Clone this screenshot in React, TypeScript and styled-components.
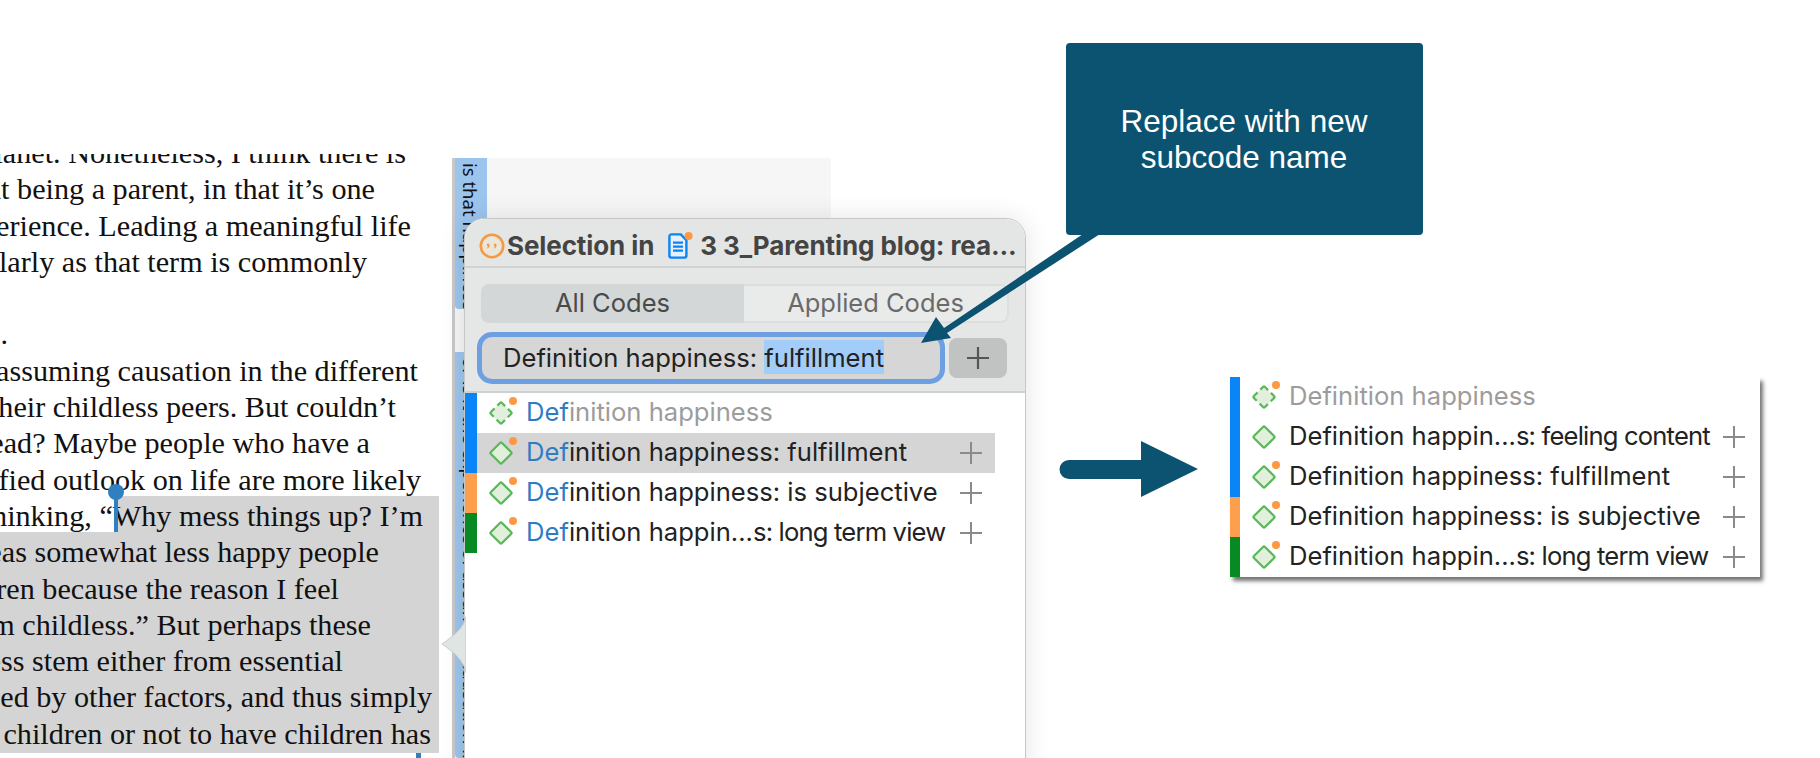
import React from 'react';
import styled, { createGlobalStyle } from 'styled-components';

const GlobalStyle = createGlobalStyle`
  html, body {
    margin: 0;
    padding: 0;
    background: #fff;
  }
`;

const NAVY = '#0b5370';
const UI_FONT = `Inter, 'Noto Sans', sans-serif`;

const Page = styled.div`
  position: relative;
  display: flex;
  width: 1820px;
  height: 758px;
  overflow: hidden;
  background: #fff;
`;

/* document text on the left, cut off by the window edge */
const DocColumn = styled.div`
  width: 452px;
  height: 604px;
  margin-top: 154px;
  flex-shrink: 0;
  overflow: hidden;
`;

const DocLines = styled.div`
  margin-top: -21px;
`;

const Line = styled.div<{ $end: number; $selected?: boolean; $from?: number }>`
  position: relative;
  box-sizing: border-box;
  display: flex;
  justify-content: flex-end;
  width: 439px;
  height: 36.3px;
  padding-right: ${(p) => 439 - p.$end}px;
  font-family: 'Liberation Serif', serif;
  font-size: 30.2px;
  line-height: 40.3px;
  white-space: nowrap;
  color: #111;
  background: ${(p) =>
    p.$from
      ? `linear-gradient(to right, transparent ${p.$from}px, #d4d4d4 ${p.$from}px)`
      : p.$selected
        ? '#d4d4d4'
        : 'transparent'};
  &:last-child {
    height: 39.3px;
  }
`;

const StartCaret = styled.div`
  position: absolute;
  left: 114px;
  top: -2px;
  width: 4px;
  height: 40px;
  background: #2f7fc1;
  &::before {
    content: '';
    position: absolute;
    left: -6px;
    top: -10px;
    width: 16px;
    height: 16px;
    border-radius: 50%;
    background: #2f7fc1;
  }
`;

const EndCaret = styled.div`
  position: absolute;
  left: 416px;
  top: 100%;
  width: 5px;
  height: 8px;
  background: #2f7fc1;
`;

/* margin with the coded segment stripes */
const MarginColumn = styled.div`
  display: flex;
  flex-direction: column;
  gap: 43px;
  width: 379px;
  margin-top: 158px;
  flex-shrink: 0;
  box-sizing: border-box;
  border-left: 3px solid #c8c8c8;
  background: #f6f6f6;
`;

const Stripe = styled.div<{ $height: number }>`
  box-sizing: border-box;
  width: 32px;
  height: ${(p) => p.$height}px;
  padding: 5px 3px 0 0;
  overflow: hidden;
  border-radius: 0 0 4px 4px;
  background: #9cc5ee;
  font-family: 'Noto Sans', sans-serif;
  font-size: 18.5px;
  line-height: 28px;
  color: #111;
  writing-mode: vertical-rl;
  white-space: nowrap;
`;

/* the coding popover */
const Popover = styled.div`
  position: absolute;
  left: 464px;
  top: 218px;
  width: 562px;
  height: 560px;
  box-sizing: border-box;
  border: 1px solid #c6c8c7;
  border-radius: 20px 20px 0 0;
  background: #fff;
  box-shadow: 0 0 26px rgba(0, 0, 0, 0.11);
  font-family: ${UI_FONT};
`;

const PopoverTip = styled.svg`
  position: absolute;
  left: -24px;
  top: 398px;
  width: 25px;
  height: 56px;
`;

const PopHeader = styled.div`
  display: flex;
  align-items: center;
  box-sizing: border-box;
  height: 49px;
  padding: 6px 0 0 14px;
  border-radius: 20px 20px 0 0;
  border-bottom: 2px solid #d1d3d2;
  background: #e3e6e5;
  font-size: 26px;
  font-weight: 700;
  letter-spacing: -0.1px;
  color: #444;
  white-space: nowrap;
`;

const HeaderText = styled.span<{ $gap: number }>`
  margin-left: ${(p) => p.$gap}px;
`;

const IconBox = styled.svg<{ $gap?: number; $pull?: number }>`
  flex-shrink: 0;
  margin-left: ${(p) => p.$gap ?? 0}px;
  margin-right: ${(p) => p.$pull ?? 0}px;
`;

const Controls = styled.div`
  display: flex;
  flex-direction: column;
  gap: 9px;
  padding: 16px 16px 7px 12px;
  border-bottom: 2px solid #cfd1d0;
  background: #e4e7e6;
`;

const Tabs = styled.div`
  display: flex;
  height: 39px;
  margin-left: 4px;
  overflow: hidden;
  border-radius: 8px;
`;

const Tab = styled.div<{ $active?: boolean }>`
  display: flex;
  align-items: center;
  justify-content: center;
  box-sizing: border-box;
  width: ${(p) => (p.$active ? '263px' : '265px')};
  padding-bottom: 2px;
  border: ${(p) => (p.$active ? 'none' : '2px solid #dcdfde')};
  border-left: none;
  border-radius: ${(p) => (p.$active ? '0' : '0 8px 8px 0')};
  background: ${(p) => (p.$active ? '#d3d7d7' : '#e9ebea')};
  font-size: 25.5px;
  color: ${(p) => (p.$active ? '#4a4a4a' : '#6a6a6a')};
`;

const SearchRow = styled.div`
  display: flex;
  align-items: center;
  gap: 4px;
`;

const SearchField = styled.div`
  display: flex;
  align-items: center;
  box-sizing: border-box;
  width: 468px;
  height: 52px;
  padding: 0 0 2px 21px;
  border: 5px solid #6e9fe3;
  border-radius: 15px;
  background: #d6d6d6;
  font-size: 25.6px;
  color: #222;
  white-space: pre;
`;

const SelectedText = styled.span`
  display: inline-flex;
  align-items: center;
  height: 34px;
  background: #a2cdf8;
`;

const AddButton = styled.div`
  display: flex;
  align-items: center;
  justify-content: center;
  width: 58px;
  height: 40px;
  border-radius: 8px;
  background: #c0c3c2;
`;

const RowList = styled.div`
  display: flex;
  flex-direction: column;
`;

const Row = styled.div`
  display: flex;
  height: 40px;
`;

const RowBar = styled.div<{ $color: string; $width: number }>`
  width: ${(p) => p.$width}px;
  flex-shrink: 0;
  background: ${(p) => p.$color};
`;

const RowBody = styled.div<{ $selected?: boolean; $width: number; $inset: number }>`
  display: flex;
  align-items: center;
  box-sizing: border-box;
  width: ${(p) => p.$width}px;
  padding: 0 ${(p) => p.$inset}px 0 11px;
  background: ${(p) => (p.$selected ? '#d5d5d5' : 'transparent')};
  font-family: ${UI_FONT};
  font-size: 25.6px;
  white-space: nowrap;
`;

const RowName = styled.span<{ $dim?: boolean }>`
  margin-left: 6px;
  padding-bottom: 3px;
  color: ${(p) => (p.$dim ? '#9c9c9c' : '#222')};
`;

const Match = styled.span`
  color: #2e7dc4;
`;

// the part after the dots in a shortened name runs tighter
const NameTail = styled.span`
  letter-spacing: -0.82px;
`;

const RowPlus = styled.span`
  display: flex;
  margin-left: auto;
`;

/* the result on the right side */
const ResultArea = styled.div`
  display: flex;
  align-items: flex-start;
  padding: 377px 0 0 228px;
`;

const BigArrow = styled.svg`
  width: 139px;
  height: 56px;
  margin-top: 64px;
  flex-shrink: 0;
`;

const ResultCard = styled.div`
  margin-left: 32px;
  background: #fff;
  box-shadow: 3px 4px 4px rgba(0, 0, 0, 0.55);
`;

/* annotation */
const Callout = styled.div`
  position: absolute;
  left: 1066px;
  top: 43px;
  display: flex;
  align-items: center;
  justify-content: center;
  width: 357px;
  height: 192px;
  padding-right: 1px;
  box-sizing: border-box;
  border-radius: 4px;
  background: ${NAVY};
  font-family: 'Liberation Sans', sans-serif;
  font-size: 31.5px;
  line-height: 36px;
  text-align: center;
  color: #fff;
`;

const Overlay = styled.svg`
  position: absolute;
  left: 0;
  top: 0;
  width: 1820px;
  height: 758px;
  pointer-events: none;
`;

const PlusMark = ({ color, size = 22, weight = 2 }: { color: string; size?: number; weight?: number }) => (
  <svg width={size} height={size} viewBox={`0 0 ${size} ${size}`}>
    <path d={`M${size / 2} 0V${size}M0 ${size / 2}H${size}`} stroke={color} strokeWidth={weight} fill="none" />
  </svg>
);

const CodeIcon = ({ dashed, dot }: { dashed?: boolean; dot?: boolean }) => (
  <IconBox width="32" height="32" viewBox="0 0 32 32">
    <rect
      x="5.2"
      y="8.2"
      width="15.6"
      height="15.6"
      rx="1.4"
      transform="rotate(45 13 16)"
      fill="#e2efdc"
      stroke="#5cb85c"
      strokeWidth="2.3"
      strokeDasharray={dashed ? '11 4' : undefined}
      strokeDashoffset={dashed ? '6.6' : undefined}
    />
    {dot && <circle cx="25" cy="4" r="4" fill="#fb9a43" />}
  </IconBox>
);

const QuoteIcon = () => (
  <IconBox width="26" height="26" viewBox="0 0 26 26">
    <circle cx="13" cy="13" r="11.2" fill="#eae6dc" stroke="#f59a42" strokeWidth="2.6" />
    <path
      d="M8.9 10.6a1.7 1.7 0 0 1 1.7 1.7c0 1.6-.8 2.8-2.2 3.3l-.4-.8c.6-.3 1-.8 1.1-1.3a1.5 1.5 0 0 1-.2-2.9zM15.9 10.6a1.7 1.7 0 0 1 1.7 1.7c0 1.6-.8 2.8-2.2 3.3l-.4-.8c.6-.3 1-.8 1.1-1.3a1.5 1.5 0 0 1-.2-2.9z"
      fill="#f59a42"
    />
  </IconBox>
);

const DocIcon = () => (
  <IconBox $gap={13} $pull={-5} width="26" height="28" viewBox="0 0 26 28">
    <path
      d="M2.4 4.4a2 2 0 0 1 2-2h9.4l5.6 5.8v15.4a2 2 0 0 1-2 2h-13a2 2 0 0 1-2-2z"
      fill="#e6f1fc"
      stroke="#0b84f5"
      strokeWidth="2.4"
    />
    <path d="M6 10.6h10M6 14.6h10M6 18.6h10" stroke="#0b84f5" strokeWidth="2.2" />
    <circle cx="21.6" cy="4" r="4" fill="#fb9a43" />
  </IconBox>
);

interface CodeItem {
  name: string;
  bar: string;
  dot?: boolean;
  dashed?: boolean;
  selected?: boolean;
}

const BLUE = '#0a85f7';
const ORANGE = '#fd9f4d';
const GREEN = '#078a24';

const popoverCodes: CodeItem[] = [
  { name: 'Definition happiness', bar: BLUE, dot: true, dashed: true },
  { name: 'Definition happiness: fulfillment', bar: BLUE, dot: true, selected: true },
  { name: 'Definition happiness: is subjective', bar: ORANGE, dot: true },
  { name: 'Definition happin...s: long term view', bar: GREEN, dot: true },
];

const resultCodes: CodeItem[] = [
  { name: 'Definition happiness', bar: BLUE, dot: true, dashed: true },
  { name: 'Definition happin...s: feeling content', bar: BLUE },
  { name: 'Definition happiness: fulfillment', bar: BLUE, dot: true },
  { name: 'Definition happiness: is subjective', bar: ORANGE, dot: true },
  { name: 'Definition happin...s: long term view', bar: GREEN, dot: true },
];

const CodeName = ({ text }: { text: string }) => {
  const parts = text.split('...');
  if (parts.length === 1) return <>{text}</>;
  return (
    <>
      {parts[0]}...
      <NameTail>{parts[1]}</NameTail>
    </>
  );
};

const CodeRows = ({
  items,
  highlight,
  barWidth,
  bodyWidth,
  inset,
}: {
  items: CodeItem[];
  highlight?: string;
  barWidth: number;
  bodyWidth: number;
  inset: number;
}) => (
  <RowList>
    {items.map((item) => (
      <Row key={item.name}>
        <RowBar $color={item.bar} $width={barWidth} />
        <RowBody $selected={item.selected} $width={bodyWidth} $inset={inset}>
          <CodeIcon dashed={item.dashed} dot={item.dot} />
          <RowName $dim={item.dashed}>
            {highlight && <Match>{highlight}</Match>}
            <CodeName text={highlight ? item.name.slice(highlight.length) : item.name} />
          </RowName>
          {!item.dashed && (
            <RowPlus>
              <PlusMark color="#8a8a8a" />
            </RowPlus>
          )}
        </RowBody>
      </Row>
    ))}
  </RowList>
);

const docLines: { text: string; end: number }[] = [
  { text: 'planet. Nonetheless, I think there is', end: 406 },
  { text: 'about being a parent, in that it’s one', end: 375 },
  { text: 'experience. Leading a meaningful life', end: 411 },
  { text: 'particularly as that term is commonly', end: 367 },
  { text: '\u00a0', end: 0 },
  { text: '.', end: 8 },
  { text: 'assuming causation in the different', end: 418 },
  { text: 'their childless peers. But couldn’t', end: 396 },
  { text: 'instead? Maybe people who have a', end: 370 },
  { text: 'satisfied outlook on life are more likely', end: 421 },
  { text: 'whereas somewhat less happy people', end: 379 },
  { text: 'children because the reason I feel', end: 339 },
  { text: 'I’m childless.” But perhaps these', end: 371 },
  { text: 'happiness stem either from essential', end: 343 },
  { text: 'caused by other factors, and thus simply', end: 432 },
  { text: 'have children or not to have children has', end: 431 },
];

const App = () => {
  return (
    <>
      <GlobalStyle />
      <Page>
        <DocColumn>
          <DocLines>
            {docLines.slice(0, 10).map((line) => (
              <Line key={line.text} $end={line.end}>
                {line.text}
              </Line>
            ))}
            <Line $end={423} $from={117}>
              thinking, “Why mess things up? I’m
              <StartCaret />
            </Line>
            {docLines.slice(10).map((line, i) => (
              <Line key={line.text} $end={line.end} $selected>
                {line.text}
                {i === 5 && <EndCaret />}
              </Line>
            ))}
          </DocLines>
        </DocColumn>

        <MarginColumn>
          <Stripe $height={156}>is that happiness is what we are after</Stripe>
          <Stripe $height={420}>
            or is it the experience of assuming causation in the different groups of people who do have children and those who do not
          </Stripe>
        </MarginColumn>

        <ResultArea>
          <BigArrow viewBox="0 0 139 56">
            <path d="M82 0L139 28 82 56V38H10a9.5 9.5 0 0 1 0-19H82z" fill={NAVY} />
          </BigArrow>
          <ResultCard>
            <CodeRows items={resultCodes} barWidth={10} bodyWidth={520} inset={15} />
          </ResultCard>
        </ResultArea>

        <Popover>
          <PopoverTip viewBox="0 0 25 56">
            <path d="M25 0C23 10 14 18 1 27c13 9 22 17 24 29z" fill="#dfe5e3" stroke="#c9cccb" strokeWidth="1" />
          </PopoverTip>
          <PopHeader>
            <QuoteIcon />
            <HeaderText $gap={2}>Selection in</HeaderText>
            <DocIcon />
            <HeaderText $gap={12}>3 3_Parenting blog: rea...</HeaderText>
          </PopHeader>
          <Controls>
            <Tabs>
              <Tab $active>All Codes</Tab>
              <Tab>Applied Codes</Tab>
            </Tabs>
            <SearchRow>
              <SearchField>
                Definition happiness: <SelectedText>fulfillment</SelectedText>
              </SearchField>
              <AddButton>
                <PlusMark color="#555" weight={2.2} />
              </AddButton>
            </SearchRow>
          </Controls>
          <CodeRows items={popoverCodes} highlight="Def" barWidth={12} bodyWidth={518} inset={13} />
        </Popover>

        <Callout>
          Replace with new
          <br />
          subcode name
        </Callout>
        <Overlay viewBox="0 0 1820 758">
          <path d="M1083 234L944 328 936 317 921 343 951 338 947 333 1100 234z" fill={NAVY} />
        </Overlay>
      </Page>
    </>
  );
};

export default App;
